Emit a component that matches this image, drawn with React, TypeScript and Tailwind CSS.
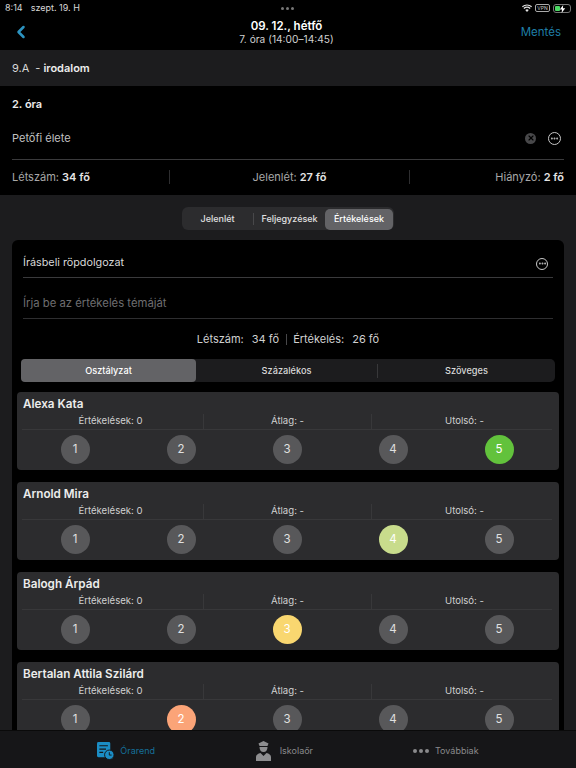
import { ChevronLeft, Ellipsis, X } from 'lucide-react'

const students = [
  { name: 'Alexa Kata', grade: 5 },
  { name: 'Arnold Mira', grade: 4 },
  { name: 'Balogh Árpád', grade: 3 },
  { name: 'Bertalan Attila Szilárd', grade: 2 },
]

function MoreIcon({ className }: { className: string }) {
  return (
    <span className={`flex items-center justify-center rounded-full border border-[#c8c8c8] text-[#c8c8c8] ${className}`}>
      <Ellipsis size={9} strokeWidth={3} />
    </span>
  )
}

function StatusBar() {
  return (
    <div className="relative flex h-[16px] items-center justify-between pl-[5px] pr-[5px] text-[9px] text-[#d8d8d8]">
      <div className="flex gap-[8px]">
        <span>8:14</span>
        <span>szept. 19. H</span>
      </div>
      <div className="absolute left-[281px] top-[7px] flex gap-[2px]">
        <span className="h-[3px] w-[3px] rounded-full bg-[#777]" />
        <span className="h-[3px] w-[3px] rounded-full bg-[#777]" />
        <span className="h-[3px] w-[3px] rounded-full bg-[#777]" />
      </div>
      <div className="flex items-center gap-[3px]">
        <svg width="10" height="8" viewBox="0 0 20 16" fill="#e5e5e5">
          <path d="M10 16 6.5 12a5 5 0 0 1 7 0L10 16ZM4.6 10 2.8 8a10.5 10.5 0 0 1 14.4 0l-1.8 2a8 8 0 0 0-10.8 0ZM1.4 6.4 0 4.6a15 15 0 0 1 20 0l-1.4 1.8a13 13 0 0 0-17.2 0Z" />
        </svg>
        <span className="flex h-[8px] w-[15px] items-center justify-center rounded-[2px] border border-[#aaa] text-[5px] leading-none text-[#ccc]">VPN</span>
        <span className="relative flex h-[9px] w-[18px] items-center rounded-[3px] border border-[#777] p-px">
          <span className="h-full w-[5px] rounded-[1px] bg-[#4cd964]" />
          <svg className="absolute left-[5px] top-0" width="7" height="8" viewBox="0 0 7 8" fill="#fff">
            <path d="M4.2 0 .8 4.6h2.2L2.6 8 6.2 3.2H3.9L4.2 0Z" />
          </svg>
        </span>
      </div>
    </div>
  )
}

function Header() {
  return (
    <div className="bg-black">
      <StatusBar />
      <div className="grid h-[34px] grid-cols-[1fr_auto_1fr] items-start pl-[12px] pr-[15px]">
        <ChevronLeft size={20} strokeWidth={3} className="mt-[6px] -ml-[1px] text-[#2c93c0]" />
        <div className="flex flex-col items-center pt-[3px]">
          <span className="text-[11.5px] leading-[14px] font-semibold text-white">09. 12., hétfő</span>
          <span className="text-[10.2px] leading-[13px] text-[#d0d0d0]">7. óra (14:00–14:45)</span>
        </div>
        <span className="mt-[8px] text-right text-[11.5px] leading-[16px] text-[#1f7ea6]">Mentés</span>
      </div>
    </div>
  )
}

function LessonInfo() {
  return (
    <>
      <div className="flex h-[36px] items-center bg-[#1c1c1e] px-[12px] text-[11px] text-[#d8d8d8]">
        <span>9.A</span>
        <span className="ml-[6px]">-</span>
        <span className="ml-[3px] font-semibold text-[#ececec]">irodalom</span>
      </div>
      <div className="bg-black px-[12px]">
        <div className="flex h-[36px] items-center text-[11px] font-semibold text-[#ececec]">2. óra</div>
        <div className="flex h-[38px] items-center justify-between border-b border-[#3a3a3c] pb-[5px] text-[11px] text-[#c0c0c0]">
          <span>Petőfi élete</span>
          <div className="mr-[3px] flex items-center gap-[12px]">
            <span className="flex h-[11px] w-[11px] items-center justify-center rounded-full bg-[#48484a] text-black">
              <X size={8} strokeWidth={3.5} />
            </span>
            <MoreIcon className="h-[13px] w-[13px]" />
          </div>
        </div>
        <div className="grid h-[35px] grid-cols-[158px_240px_1fr] items-center pb-[1px] text-[11px] text-[#a8a8a8]">
          <div className="flex h-[14px] items-center border-r border-[#2e2e30]">
            <span>Létszám: <b className="font-semibold text-[#e4e4e4]">34 fő</b></span>
          </div>
          <div className="flex h-[14px] items-center justify-center border-r border-[#2e2e30]">
            <span>Jelenlét: <b className="font-semibold text-[#e4e4e4]">27 fő</b></span>
          </div>
          <div className="text-right">
            Hiányzó: <b className="font-semibold text-[#e4e4e4]">2 fő</b>
          </div>
        </div>
      </div>
    </>
  )
}

function TopTabs() {
  return (
    <div className="flex justify-center pt-[12px] pb-[10px]">
      <div className="flex h-[23px] w-[212px] items-center rounded-[6px] bg-[#2c2c2e] pt-px text-[9px] font-medium text-[#e0e0e0]">
        <span className="w-[71px] text-center">Jelenlét</span>
        <span className="flex h-[12px] w-[72px] items-center justify-center border-l border-[#48484a]">Feljegyzések</span>
        <span className="flex h-[21px] w-[68px] items-center justify-center rounded-[5px] bg-[#636366] text-white">Értékelések</span>
      </div>
    </div>
  )
}

function StudentCard({ name, grade }: { name: string; grade: number }) {
  const colors: Record<number, string> = {
    5: 'bg-[#62c23c] text-white',
    4: 'bg-[#c8dc8c] text-white',
    3: 'bg-[#f9d770] text-white',
    2: 'bg-[#fba478] text-white',
  }
  return (
    <div className="h-[78px] shrink-0 rounded-[4px] bg-[#2c2c2e] pr-[7px] pl-[5px]">
      <div className="px-[1px] pt-[5px] text-[11.7px] leading-[15px] font-semibold text-[#ececec]">{name}</div>
      <div className="grid h-[18px] grid-cols-[182px_168px_1fr] items-center border-b border-[#38383a] pt-[2px] text-center text-[9.6px] text-[#d0d0d0]">
        <span className="border-r border-[#38383a] pr-[4px]">Értékelések: 0</span>
        <span className="border-r border-[#38383a]">Átlag: -</span>
        <span className="pl-[5px]">Utolsó: -</span>
      </div>
      <div className="grid grid-cols-5 pt-[5px]">
        {[1, 2, 3, 4, 5].map((n) => (
          <div key={n} className="flex justify-center">
            <span
              className={`flex h-[29px] w-[29px] items-center justify-center rounded-full text-[11.5px] ${
                n === grade ? colors[grade] : 'bg-[#58585a] text-[#e0e0e0]'
              }`}
            >
              {n}
            </span>
          </div>
        ))}
      </div>
    </div>
  )
}

function GradeCard() {
  return (
    <div className="rounded-t-[6px] bg-black px-[5px]">
      <div className="mx-[6px] flex h-[38px] items-center justify-between border-b border-[#3a3a3c] pt-[10px] text-[10.8px] text-[#d8d8d8]">
        <span>Írásbeli röpdolgozat</span>
        <MoreIcon className="mr-[5px] h-[12px] w-[12px]" />
      </div>
      <div className="mx-[6px] flex h-[41px] items-center border-b border-[#2e2e30] pt-[11px] pb-[1px] text-[11.3px] text-[#6e6e70]">
        Írja be az értékelés témáját
      </div>
      <div className="flex h-[40px] items-center justify-center pt-[1px] text-[11px] text-[#d0d0d0]">
        <span>Létszám:</span>
        <span className="ml-[8px]">34 fő</span>
        <span className="ml-[7px] mr-[6px] h-[11px] border-l border-[#48484a]" />
        <span>Értékelés:</span>
        <span className="ml-[8px]">26 fő</span>
      </div>
      <div className="ml-[4px] mr-[4px] flex h-[23px] items-center rounded-[5px] bg-[#1c1c1e] text-[9.2px] font-medium text-[#d8d8d8]">
        <span className="flex h-full w-[175px] items-center justify-center rounded-[4px] bg-[#636366] text-white">Osztályzat</span>
        <span className="w-[181px] text-center">Százalékos</span>
        <span className="flex h-[14px] flex-1 items-center justify-center border-l border-[#38383a]">Szöveges</span>
      </div>
      <div className="flex flex-col gap-[12px] pt-[10px]">
        {students.map((s) => (
          <StudentCard key={s.name} name={s.name} grade={s.grade} />
        ))}
      </div>
    </div>
  )
}

function TabBar() {
  return (
    <div className="grid h-[38px] shrink-0 grid-cols-[155px_158px_1fr] items-center border-t border-[#0a0a0a] bg-[#161618] pt-[2px] text-[9px]">
      <div className="flex items-center justify-end gap-[5px] text-[#15709a]">
        <svg width="18" height="18" viewBox="0 0 19 19">
          <rect x="0" y="0" width="14" height="16" rx="1.5" fill="#1b8dc4" />
          <path d="M2.5 4h9M2.5 7.5h7M2.5 11h4" stroke="#161618" strokeWidth="1.2" />
          <circle cx="13" cy="13.5" r="5" fill="#1b8dc4" stroke="#161618" strokeWidth="1" />
          <path d="M13 10.8v3h2.4" stroke="#161618" strokeWidth="1" fill="none" />
        </svg>
        <span>Órarend</span>
      </div>
      <div className="flex items-center justify-end gap-[9px] text-[#8a8a8c]">
        <svg width="15" height="20" viewBox="0 0 15 20" fill="#8e8e90">
          <path d="M2.5 2.5 7.5 0l5 2.5-1 2.5h-8l-1-2.5Z" />
          <path d="M3.5 6h8c0 3-1.5 5-4 5s-4-2-4-5Z" />
          <path d="M0 20v-4c0-2 2-3.5 4.5-4l3 3 3-3c2.500.5 4.500 2 4.500 4v4H0Z" />
        </svg>
        <span>Iskolaőr</span>
      </div>
      <div className="flex items-center justify-start gap-[6px] pl-[100px] text-[#8a8a8c]">
        <span className="flex gap-[2px]">
          <span className="h-[4px] w-[4px] rounded-full bg-[#8a8a8c]" />
          <span className="h-[4px] w-[4px] rounded-full bg-[#8a8a8c]" />
          <span className="h-[4px] w-[4px] rounded-full bg-[#8a8a8c]" />
        </span>
        <span>Továbbiak</span>
      </div>
    </div>
  )
}

export default function App() {
  return (
    <div className="flex h-[768px] w-[576px] flex-col overflow-hidden bg-black font-['Inter','Noto_Sans',sans-serif]">
      <Header />
      <LessonInfo />
      <div className="min-h-0 flex-1 overflow-hidden bg-[#1c1c1e] px-[12px]">
        <TopTabs />
        <GradeCard />
      </div>
      <TabBar />
    </div>
  )
}
